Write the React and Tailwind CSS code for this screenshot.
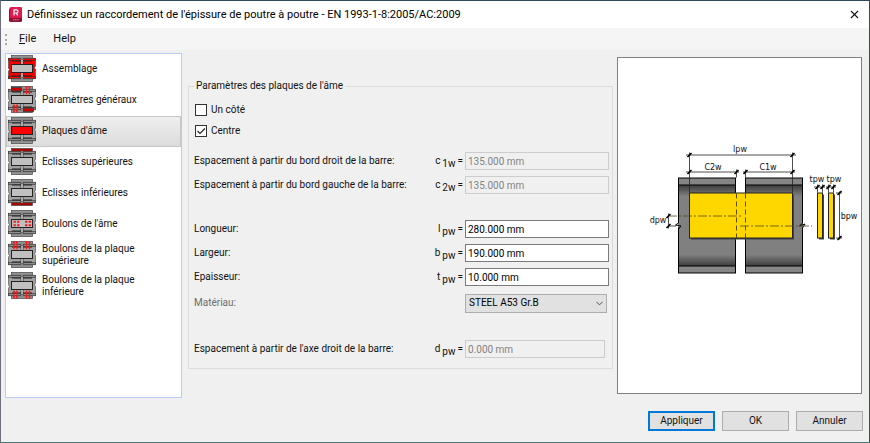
import { useState } from 'react';
import { X, ChevronDown } from 'lucide-react';

const NAV_ITEMS = [
  { id: 'assembly', label: 'Assemblage', icon: { body: '#f80000', topFlange: '#f80000', bottomFlange: '#f80000' } },
  { id: 'general', label: 'Paramètres généraux', icon: { general: true } },
  { id: 'web', label: "Plaques d'âme", icon: { plate: '#ff0000' } },
  { id: 'top', label: 'Eclisses supérieures', icon: { topPlate: '#b00000' } },
  { id: 'bottom', label: 'Eclisses inférieures', icon: { bottomPlate: '#b00000' } },
  { id: 'web-bolts', label: "Boulons de l'âme", icon: { webBolts: true } },
  { id: 'top-bolts', label: 'Boulons de la plaque supérieure', icon: { topBolts: true } },
  { id: 'bottom-bolts', label: 'Boulons de la plaque inférieure', icon: { bottomBolts: true } },
];

const DIMENSIONS = [
  { id: 'lpw', label: 'Longueur:', symbol: 'l', sub: 'pw', value: '280.000 mm' },
  { id: 'bpw', label: 'Largeur:', symbol: 'b', sub: 'pw', value: '190.000 mm' },
  { id: 'tpw', label: 'Epaisseur:', symbol: 't', sub: 'pw', value: '10.000 mm' },
];

// ── Icons ──────────────────────────────────────────────────────────────────

function AppIcon() {
  return (
    <svg width="14" height="15" viewBox="0 0 14 15" className="shrink-0" aria-hidden="true">
      <rect x="0" y="1" width="13" height="14" rx="1.5" fill="#8f0f35" />
      <rect x="1" y="0" width="12" height="11" rx="1" fill="#e0194f" />
      <path d="M5 8.5V2.8h2.4a1.6 1.6 0 0 1 0 3.2H5M7 6l1.8 2.5" fill="none" stroke="#fff" strokeWidth="1.2" />
      <path d="M4 12.8h6" stroke="#d98aa0" strokeWidth="1" strokeDasharray="1.5 .6" />
    </svg>
  );
}

function Bolt({ x, y }) {
  return (
    <path
      d={`M${x} ${y}v8.6M${x + 3} ${y}v8.6M${x - 1} ${y + 1.5}h2M${x + 2} ${y + 1.5}h2M${x - 1} ${y + 6.5}h2M${x + 2} ${y + 6.5}h2`}
      stroke="#ff1818"
      strokeWidth="1.2"
    />
  );
}

function SpliceIcon({
  body = '#a2a2a2',
  plate = '#c0c0c0',
  topPlate = '#949494',
  bottomPlate = '#949494',
  topFlange = '#8e8e8e',
  bottomFlange = '#8e8e8e',
  general,
  webBolts,
  topBolts,
  bottomBolts,
}) {
  return (
    <svg width="28" height="27" viewBox="0 0 28 27" className="shrink-0" aria-hidden="true">
      <path d="M.5 3.5H27.5V11L26.3 13 28 14.5 27.5 16V23.5H.5V16L1.5 14.5 0 12.5 .5 11z" fill={body} stroke="#555" strokeWidth=".7" />
      {/* flanges */}
      <rect x=".5" y="3.2" width="27" height="2.4" fill={topFlange} stroke="#333" strokeWidth=".6" />
      <rect x=".5" y="21.4" width="27" height="2.4" fill={bottomFlange} stroke="#333" strokeWidth=".6" />
      {/* cover plates */}
      <rect x="3.5" y=".5" width="21" height="2.7" fill={topPlate} stroke="#444" strokeWidth=".7" />
      <rect x="3.5" y="23.8" width="21" height="2.7" fill={bottomPlate} stroke="#444" strokeWidth=".7" />
      <path d="M4 6H24M4 21H24" stroke="#222" strokeWidth="1" />
      {/* joint */}
      <path d="M14 3.2v6.3M14 17.5v6.3" stroke="#333" strokeWidth="2.8" />
      <path d="M14 3.2v6.3M14 17.5v6.3" stroke="#ddd" strokeWidth="1.4" />
      <path d="M12 4.4h4M12 22.6h4" stroke="#666" strokeWidth="1" />
      <rect x="3.5" y="9.5" width="21" height="8" fill={plate} stroke="#222" />
      {general && (
        <>
          <path d="M3 3.2h11M15 23.8h11" stroke="#d00000" strokeWidth="3" />
          <path d="M3 5h11M15 22h11M3 1.4h11M15 25.6h11" stroke="#222" strokeWidth=".7" />
          <Bolt x={18.5} y={0} />
          <Bolt x={6} y={18.4} />
        </>
      )}
      {webBolts && (
        <path d="M5.5 11.7h7M5.5 15.3h7M17 11.7h7M17 15.3h7" stroke="#ff1818" strokeWidth="2" strokeDasharray="2.4 1.2" />
      )}
      {topBolts && (
        <>
          <Bolt x={6} y={0} />
          <Bolt x={18.5} y={0} />
        </>
      )}
      {bottomBolts && (
        <>
          <Bolt x={6} y={18.4} />
          <Bolt x={18.5} y={18.4} />
        </>
      )}
    </svg>
  );
}

// ── Plate preview ──────────────────────────────────────────────────────────

function Tick({ x, y }) {
  return <path d={`M${x - 2} ${y + 2}l4 -4`} stroke="#000" strokeWidth="1.6" />;
}

function SplicePreview() {
  return (
    <svg viewBox="0 0 243 334" className="h-full w-full" role="img" aria-label="Plaques d'âme">
      <defs>
        <linearGradient id="web" x1="0" y1="0" x2="0" y2="1">
          <stop offset="0" stopColor="#3c3c3c" />
          <stop offset=".14" stopColor="#808080" />
          <stop offset=".86" stopColor="#808080" />
          <stop offset="1" stopColor="#3c3c3c" />
        </linearGradient>
      </defs>

      {/* beams */}
      {[{ x: 60.5, w: 57 }, { x: 127.5, w: 57 }].map(({ x, w }) => (
        <g key={x} stroke="#000">
          <rect x={x} y="119.5" width={w} height="95" fill="#858585" />
          <rect x={x} y="126.5" width={w} height="81" fill="url(#web)" />
        </g>
      ))}
      <path d="M59.5 164v5M185.5 164v5" fill="none" stroke="#fff" strokeWidth="2" />
      <path d="M60.5 160v4.5l-3 2 5.5 1-2.5 3v3M184.5 160v4.5l-3 3 5.5-2-2.5 4v3" fill="none" stroke="#000" />

      {/* plates */}
      <g fill="#444">
        <rect x="73" y="136" width="103" height="45" />
        <rect x="201" y="136" width="5" height="45" />
        <rect x="212" y="136" width="5" height="45" />
      </g>
      <g fill="#ffd700" stroke="#222">
        <rect x="71.5" y="134.5" width="103" height="45" />
        <rect x="199.5" y="134.5" width="5" height="45" />
        <rect x="210.5" y="134.5" width="5" height="45" />
      </g>
      <path d="M118.5 135v45M127.5 135v45" stroke="#5c4c00" strokeDasharray="5 3" />
      <path d="M50 157.5h73M122 167.5h72" stroke="#554a20" strokeWidth=".8" strokeDasharray="9 2 2 2" />

      {/* dimension lines */}
      <path
        d="M71.5 94v40M174.5 94v40M68 96.5h110M68 113.5h53M125 113.5h52M118.5 111v8M127.5 111v8M196 128.5h11M208 128.5h10M199.5 126v8M204.5 126v8M210.5 126v8M215.5 126v8M221.5 133v48M218 134.5h6M218 179.5h6M50.5 155v15M50 167.5h8"
        fill="none"
        stroke="#222"
        strokeWidth=".8"
      />
      {[[71.5, 96.5], [174.5, 96.5], [71.5, 113.5], [118.5, 113.5], [127.5, 113.5], [174.5, 113.5],
        [199.5, 128.5], [204.5, 128.5], [210.5, 128.5], [215.5, 128.5], [221.5, 134.5], [221.5, 179.5],
        [50.5, 157.5], [50.5, 167.5]].map(([x, y]) => (
        <Tick key={`${x}-${y}`} x={x} y={y} />
      ))}

      <g className="font-['DejaVu_Sans'] text-[8px]" fill="#111" textAnchor="middle">
        <text x="122" y="93">lpw</text>
        <text x="95" y="111">C2w</text>
        <text x="150" y="111">C1w</text>
        <text x="199" y="123">tpw</text>
        <text x="216" y="123">tpw</text>
        <text x="231" y="160">bpw</text>
        <text x="40" y="164">dpw</text>
      </g>
    </svg>
  );
}

// ── Form parts ─────────────────────────────────────────────────────────────

function FieldRow({ id, label, symbol, sub, muted, children }) {
  return (
    <div className="flex h-6 items-center">
      <label htmlFor={id} className={`flex-1 whitespace-nowrap ${muted ? 'text-[#6d6d6d]' : ''}`}>{label}</label>
      {symbol && (
        <span className="mr-0.5 flex items-center gap-0.5">
          <span>{symbol}</span>
          <span className="pt-1.5">{sub}</span>
          <span>=</span>
        </span>
      )}
      <div className="w-36">{children}</div>
    </div>
  );
}

function TextField({ disabled, width = 'w-36', ...props }) {
  return (
    <input
      type="text"
      disabled={disabled}
      className={`block h-[18px] border px-0.5 outline-none ${width} ${
        disabled ? 'border-[#cccccc] bg-[#f0f0f0] text-[#838383]' : 'border-[#7a7a7a] bg-white text-black'
      }`}
      {...props}
    />
  );
}

function CheckBox({ label, checked, onChange }) {
  return (
    <label className="flex h-[21px] items-center gap-1">
      <span className="relative h-3 w-3">
        <input
          type="checkbox"
          checked={checked}
          onChange={onChange}
          className="block h-3 w-3 appearance-none border border-[#333] bg-white"
        />
        {checked && (
          <svg viewBox="0 0 12 12" className="pointer-events-none absolute inset-0">
            <path d="M2.5 6l2.5 2.5 5-5" fill="none" stroke="#222" strokeWidth="1.2" />
          </svg>
        )}
      </span>
      {label}
    </label>
  );
}

function DialogButton({ primary, children }) {
  return (
    <button
      type="button"
      className={`h-5 w-[67px] bg-[#e1e1e1] ${primary ? 'border-2 border-[#0078d7]' : 'border border-[#adadad]'}`}
    >
      {children}
    </button>
  );
}

export default function App() {
  const [active, setActive] = useState('web');
  const [oneSide, setOneSide] = useState(false);
  const [centered, setCentered] = useState(true);

  return (
    <div className="flex min-h-screen flex-col border border-t-[#2f4a55] border-r-[#35553a] border-b-[#4a7a7a] border-l-[#6b6f80] bg-[#f0f0f0] font-['Roboto','Liberation_Sans',sans-serif] text-[10px] leading-3 text-[#111]">
      <header className="flex h-[27px] items-center gap-1 bg-white pr-2 pl-2">
        <AppIcon />
        <h1 className="flex-1 text-[11px] text-black">
          Définissez un raccordement de l'épissure de poutre à poutre - EN 1993-1-8:2005/AC:2009
        </h1>
        <button type="button" aria-label="Fermer">
          <X size={13} strokeWidth={2} />
        </button>
      </header>

      <nav className="flex h-[22px] items-center bg-[#f5f5f5] pl-1 text-[11px]">
        <span className="mr-3 h-[11px] border-l-2 border-dotted border-[#aaa]" />
        <button type="button" className="mr-[17px]"><span className="underline">F</span>ile</button>
        <button type="button">Help</button>
      </nav>

      <main className="flex flex-1 pt-[3px] pr-[7px] pl-1">
        <ul className="w-[177px] border border-[#bccbf5] bg-white">
          {NAV_ITEMS.map(({ id, label, icon }) => (
            <li key={id}>
              <button
                type="button"
                onClick={() => setActive(id)}
                className={`flex h-[31px] w-full items-center gap-1.5 border pr-8 pb-0.5 pl-px text-left ${
                  active === id
                    ? 'border-[#c6c6c6] bg-linear-to-b from-[#efefef] to-[#dcdcdc]'
                    : 'border-transparent'
                }`}
              >
                <SpliceIcon {...icon} />
                {label}
              </button>
            </li>
          ))}
        </ul>

        <div className="flex-1 pt-[27px] pr-1 pb-[29px] pl-1.5">
          <fieldset className="h-full border border-[#dcdcdc] pr-[3px] pl-[5px]">
            <legend className="px-0.5">Paramètres des plaques de l'âme</legend>

            <div className="mt-[7px] pl-px">
              <CheckBox label="Un côté" checked={oneSide} onChange={(e) => setOneSide(e.target.checked)} />
              <CheckBox label="Centre" checked={centered} onChange={(e) => setCentered(e.target.checked)} />
            </div>

            <div className="mt-2">
              <FieldRow id="c1w" label="Espacement à partir du bord droit de la barre:" symbol="c" sub="1w">
                <TextField id="c1w" defaultValue="135.000 mm" disabled />
              </FieldRow>
              <FieldRow id="c2w" label="Espacement à partir du bord gauche de la barre:" symbol="c" sub="2w">
                <TextField id="c2w" defaultValue="135.000 mm" disabled />
              </FieldRow>
            </div>

            <div className="mt-5">
              {DIMENSIONS.map(({ value, ...row }) => (
                <FieldRow key={row.id} {...row}>
                  <TextField id={row.id} defaultValue={value} />
                </FieldRow>
              ))}
            </div>

            <div className="mt-0.5">
              <FieldRow id="material" label="Matériau:" muted>
                <div className="relative w-[142px]">
                  <select id="material" className="block h-[19px] w-full appearance-none border border-[#adadad] bg-[#e1e1e1] pl-[3px] text-black">
                    <option>STEEL A53 Gr.B</option>
                  </select>
                  <ChevronDown size={11} strokeWidth={2} className="pointer-events-none absolute top-1 right-0.5 text-[#444]" />
                </div>
              </FieldRow>
            </div>

            <div className="mt-[22px]">
              <FieldRow id="dpw" label="Espacement à partir de l'axe droit de la barre:" symbol="d" sub="pw">
                <TextField id="dpw" defaultValue="0.000 mm" width="w-35" disabled />
              </FieldRow>
            </div>
          </fieldset>
        </div>

        <div className="w-[245px] pt-1 pb-1">
          <div className="h-full border border-[#808080] bg-white">
            <SplicePreview />
          </div>
        </div>
      </main>

      <footer className="flex justify-end gap-[7px] pt-[13px] pr-1.5 pb-[11px]">
        <DialogButton primary>Appliquer</DialogButton>
        <DialogButton>OK</DialogButton>
        <DialogButton>Annuler</DialogButton>
      </footer>
    </div>
  );
}
